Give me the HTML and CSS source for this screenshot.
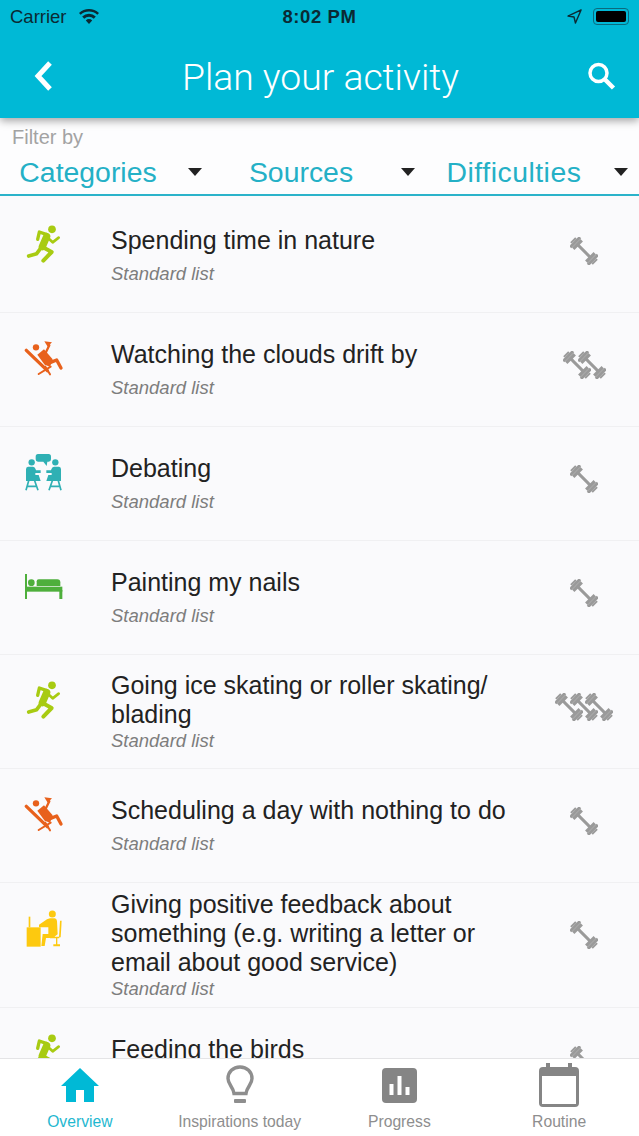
FILE: index.html
```html
<!DOCTYPE html>
<html lang="en">
<head>
  <meta charset="UTF-8" />
  <title>Plan your activity</title>
  <link rel="stylesheet" href="styles.css">
</head>
<body>
  <svg class="defs" width="0" height="0">
    <symbol id="runner" viewBox="72 42 132 132">
      <g fill="none" stroke="#a8cb12" stroke-linecap="round" stroke-linejoin="round">
        <path d="M141 74 118 66 113 88" stroke-width="10"/>
        <path d="M144 84 158 97 176 83" stroke-width="8"/>
        <path d="M140 80 127 110" stroke-width="22"/>
        <path d="M129 112 155 126 130 152" stroke-width="12"/>
        <path d="M124 112 110 131 86 138" stroke-width="11"/>
      </g>
      <circle cx="156" cy="58" r="11.500" fill="#a8cb12"/>
    </symbol>
    <symbol id="chair" viewBox="72 384 132 132">
      <g fill="none" stroke="#e8611c" stroke-linecap="round" stroke-linejoin="round">
        <path d="M79 421 142 482" stroke-width="10"/>
        <path d="M116 492 152 470M136 470 150 493" stroke-width="6"/>
        <path d="M137 428 148 406" stroke-width="7"/>
        <path d="M150 458 170 450 183 474" stroke-width="10"/>
      </g>
      <path d="M112 434 132 418 158 448 150 470 134 464z" fill="#e8611c"/>
      <circle cx="108" cy="412" r="9.500" fill="#e8611c"/>
      <path d="M133 394 156 397 143 410z" fill="#e8611c"/>
    </symbol>
    <symbol id="talk" viewBox="72 726 132 132">
      <path d="M114 732h32q7 0 7 8v8q0 7-7 7h-4l-2 13-10-13h-16q-7 0-7-7v-8q0-8 7-8z" fill="#2fb0b4"/>
      <g id="talker">
        <circle cx="95" cy="757" r="9.500" fill="#2fb0b4"/>
        <path d="M84 770h15q6 0 8 8l1 3h14v8h-16v6h10l6 18H78v-35q0-8 6-8z" fill="#2fb0b4"/>
        <path d="M86 812 78 841M104 812 114 841M82 829h28" fill="none" stroke="#2fb0b4" stroke-width="5"/>
      </g>
      <use href="#talker" transform="matrix(-1 0 0 1 261 0)"/>
    </symbol>
    <symbol id="bed" viewBox="72 138 132 132">
      <g fill="#4eaf3c">
        <rect x="75" y="162" width="6" height="75"/>
        <rect x="81" y="200" width="106" height="15"/>
        <rect x="178" y="210" width="9" height="27"/>
        <circle cx="94" cy="188" r="10"/>
        <path d="M116 178h56q9 0 9 9v11h-71v-14q0-6 6-6z"/>
      </g>
    </symbol>
    <symbol id="desk" viewBox="72 54 132 132">
      <g fill="#fdc90f">
        <rect x="86" y="80" width="5" height="32"/>
        <rect x="80" y="112" width="42" height="58"/>
        <circle cx="157" cy="72" r="10.500"/>
        <path d="M150 85h14q6 0 7 8l2 40-10 7h-18v-28h-28v-8l24-16z"/>
        <path d="M150 132h14v12h-26l-4 24h-10l4-36z"/>
        <path d="M180 92h5l-3 50h-5z"/>
        <path d="M150 140h28v5h-6v18h8v6h-20v-6h8v-18h-18z"/>
      </g>
    </symbol>
    <symbol id="weight" viewBox="0 0 28 28">
      <g transform="rotate(45 14 14)" fill="#9a9a9a">
        <rect x="4" y="12.500" width="20" height="3"/>
        <rect x="-2" y="10.500" width="2" height="7"/>
        <rect x="0" y="7" width="3" height="14"/>
        <rect x="3" y="8" width="3.500" height="12"/>
        <rect x="21.500" y="8" width="3.500" height="12"/>
        <rect x="25" y="7" width="3" height="14"/>
        <rect x="28" y="10.500" width="2" height="7"/>
      </g>
    </symbol>
  </svg>

  <div class="app">
    <header class="topbar">
      <div class="status">
        <div class="status-left">
          <span>Carrier</span>
          <svg class="wifi" viewBox="0 0 20 15"><path d="M10 15 6.800 11.400a4.600 4.600 0 0 1 6.400 0zM5.200 9.700 3.200 7.500a10 10 0 0 1 13.600 0l-2 2.200a7 7 0 0 0-9.600 0zM1.700 5.800 0 4a14.600 14.600 0 0 1 20 0l-1.700 1.800a12 12 0 0 0-16.600 0z" fill="#0b2a33"/></svg>
        </div>
        <div class="status-time">8:02 PM</div>
        <div class="status-right">
          <svg class="locate" viewBox="0 0 16 16"><path d="M15 1 1 7.500l6.500 1L9 15z" fill="none" stroke="#0b2a33" stroke-width="1.500" stroke-linejoin="round"/></svg>
          <div class="battery"><div class="battery-fill"></div></div>
        </div>
      </div>
      <nav class="nav">
        <svg class="back" viewBox="0 0 20 32"><path d="M16 3 4 16l12 13" fill="none" stroke="#fff" stroke-width="5"/></svg>
        <h1>Plan your activity</h1>
        <svg class="search" viewBox="0 0 28 28"><circle cx="11" cy="11" r="8.500" fill="none" stroke="#fff" stroke-width="3.500"/><path d="m17 17 9 9" stroke="#fff" stroke-width="4.500"/></svg>
      </nav>
    </header>

    <section class="filters">
      <div class="filter-label">Filter by</div>
      <div class="pickers">
        <div class="picker"><span>Categories</span><i class="caret"></i></div>
        <div class="picker"><span>Sources</span><i class="caret"></i></div>
        <div class="picker picker-wide"><span>Difficulties</span><i class="caret"></i></div>
      </div>
    </section>

    <main class="list">
      <div class="row">
        <svg class="cat"><use href="#runner"/></svg>
        <div class="info"><div class="name">Spending time in nature</div><div class="source">Standard list</div></div>
        <div class="level"><svg><use href="#weight"/></svg></div>
      </div>
      <div class="row">
        <svg class="cat"><use href="#chair"/></svg>
        <div class="info"><div class="name">Watching the clouds drift by</div><div class="source">Standard list</div></div>
        <div class="level"><svg><use href="#weight"/></svg><svg><use href="#weight"/></svg></div>
      </div>
      <div class="row">
        <svg class="cat"><use href="#talk"/></svg>
        <div class="info"><div class="name">Debating</div><div class="source">Standard list</div></div>
        <div class="level"><svg><use href="#weight"/></svg></div>
      </div>
      <div class="row">
        <svg class="cat"><use href="#bed"/></svg>
        <div class="info"><div class="name">Painting my nails</div><div class="source">Standard list</div></div>
        <div class="level"><svg><use href="#weight"/></svg></div>
      </div>
      <div class="row">
        <svg class="cat"><use href="#runner"/></svg>
        <div class="info"><div class="name">Going ice skating or roller skating/<wbr>blading</div><div class="source">Standard list</div></div>
        <div class="level"><svg><use href="#weight"/></svg><svg><use href="#weight"/></svg><svg><use href="#weight"/></svg></div>
      </div>
      <div class="row">
        <svg class="cat"><use href="#chair"/></svg>
        <div class="info"><div class="name">Scheduling a day with nothing to do</div><div class="source">Standard list</div></div>
        <div class="level"><svg><use href="#weight"/></svg></div>
      </div>
      <div class="row">
        <svg class="cat"><use href="#desk"/></svg>
        <div class="info"><div class="name">Giving positive feedback about something (e.g. writing a letter or email about good service)</div><div class="source">Standard list</div></div>
        <div class="level"><svg><use href="#weight"/></svg></div>
      </div>
      <div class="row">
        <svg class="cat"><use href="#runner"/></svg>
        <div class="info"><div class="name">Feeding the birds</div><div class="source">Standard list</div></div>
        <div class="level"><svg><use href="#weight"/></svg></div>
      </div>
    </main>

    <footer class="tabs">
      <div class="tab active">
        <div class="tab-icon"><svg width="40" height="35" viewBox="0 0 40 35"><path d="M20 0 39 18H34V34H24V22H16V34H6V18H1z" fill="#00b9d6"/></svg></div>
        <span>Overview</span>
      </div>
      <div class="tab">
        <div class="tab-icon"><svg width="28" height="40" viewBox="0 0 28 40"><path d="M14 2C7 2 2 7 2 13.500c0 6 5 8 6 15h12c1-7 6-9 6-15C26 7 21 2 14 2z" fill="none" stroke="#8e8e8e" stroke-width="3.400"/><rect x="8" y="34" width="12" height="4" rx="1" fill="#8e8e8e"/></svg></div>
        <span>Inspirations today</span>
      </div>
      <div class="tab">
        <div class="tab-icon"><svg width="35" height="35" viewBox="0 0 35 35"><rect width="35" height="35" rx="4" fill="#858585"/><path d="M7.500 16h4v11h-4zM15.500 8h4v19h-4zM23.500 19h4v8h-4z" fill="#fff"/></svg></div>
        <span>Progress</span>
      </div>
      <div class="tab">
        <div class="tab-icon"><svg width="40" height="44" viewBox="0 0 40 44"><path d="M7 0h4v4h18V0h4v4h3q4 0 4 4v32q0 4-4 4H4q-4 0-4-4V8q0-4 4-4h3zM3 13v28h34V13z" fill="#858585"/></svg></div>
        <span>Routine</span>
      </div>
    </footer>
  </div>
</body>
</html>
```

FILE: styles.css
```css
html, body {
  margin: 0;
  padding: 0;
}
body {
  font-family: 'Liberation Sans', Arial, sans-serif;
  color: #222;
  background: #fff;
}
.defs {
  display: block;
  height: 0;
}
.app {
  width: 639px;
  height: 1136px;
  display: flex;
  flex-direction: column;
  overflow: hidden;
  background: #fafafc;
}

/* top bar */
.topbar {
  height: 118px;
  flex: none;
  background: #00b9d6;
  box-shadow: 0 3px 8px rgba(0,0,0,0.35);
  position: relative;
  z-index: 2;
}
.status {
  height: 33px;
  display: grid;
  grid-template-columns: 1fr auto 1fr;
  align-items: center;
  padding: 0 10px;
  font-size: 18.5px;
  color: #0b2a33;
}
.status-left {
  display: flex;
  align-items: center;
  gap: 12px;
}
.wifi {
  width: 20px;
  height: 15px;
}
.status-time {
  font-size: 18.5px;
  font-weight: bold;
  letter-spacing: 0.6px;
}
.status-right {
  display: flex;
  justify-content: flex-end;
  align-items: center;
  gap: 11px;
}
.locate {
  width: 15px;
  height: 15px;
}
.battery {
  width: 36px;
  height: 17px;
  box-sizing: border-box;
  border: 1px solid #0b6a7d;
  border-radius: 4px;
  padding: 2px;
}
.battery-fill {
  height: 100%;
  background: #000;
  border-radius: 2px;
}
.nav {
  height: 85px;
  display: flex;
  align-items: center;
  justify-content: space-between;
  padding: 0 23px 0 34px;
}
.nav h1 {
  margin: 2px 0 0;
  font-family: Roboto, sans-serif;
  font-weight: 300;
  font-size: 37.3px;
  color: #fff;
}
.back {
  width: 20px;
  height: 32px;
}
.search {
  width: 29px;
  height: 28px;
}

/* filters */
.filters {
  flex: none;
  height: 78px;
  box-sizing: border-box;
  background: #fdfdfe;
  border-bottom: 2px solid #2bb3ca;
  padding-top: 7px;
}
.filter-label {
  padding-left: 12px;
  font-size: 20px;
  line-height: 24px;
  color: #a3a3a3;
}
.pickers {
  display: grid;
  grid-template-columns: repeat(3, 213px);
  margin-top: 6px;
}
.picker {
  display: flex;
  align-items: center;
  padding-right: 11px;
}
.picker span {
  flex: 1;
  padding-right: 12px;
  text-align: center;
  font-size: 28.4px;
  line-height: 34px;
  color: #24b0c6;
}
.picker-wide span {
  letter-spacing: 0.5px;
}
.caret {
  width: 0;
  height: 0;
  border-left: 7px solid transparent;
  border-right: 7px solid transparent;
  border-top: 8px solid #222;
}

/* activity list */
.list {
  flex: 1;
  min-height: 0;
  overflow: hidden;
  padding-top: 3px;
}
.row {
  display: flex;
  align-items: flex-start;
  box-sizing: border-box;
  min-height: 114px;
  padding: 7px 0 6px;
  border-bottom: 1px solid #f0f0f2;
}
.cat {
  flex: none;
  width: 44px;
  height: 44px;
  margin: 18px 0 0 24px;
}
.info {
  flex: 1;
  min-width: 0;
  align-self: center;
  margin-left: 43px;
}
.name {
  min-height: 36px;
  font-size: 25px;
  line-height: 29px;
  color: #222;
}
.source {
  font-size: 18.5px;
  line-height: 24px;
  font-style: italic;
  color: #7d7d7d;
}
.level {
  flex: none;
  width: 110px;
  margin-top: 31px;
  display: flex;
  justify-content: center;
}
.level svg {
  width: 28px;
  height: 28px;
  overflow: visible;
}
.level svg + svg {
  margin-left: -13px;
}

/* bottom tabs */
.tabs {
  flex: none;
  height: 78px;
  box-sizing: border-box;
  display: grid;
  grid-template-columns: repeat(4, 1fr);
  background: #fff;
  border-top: 1px solid #e4e4e6;
  padding-top: 4px;
  position: relative;
}
.tab {
  display: flex;
  flex-direction: column;
  align-items: center;
  font-size: 15.7px;
  line-height: 20px;
  color: #8e8e8e;
}
.tab-icon {
  height: 44px;
  margin-bottom: 5px;
  display: flex;
  align-items: center;
}
.tab.active {
  color: #1fb8d0;
}
```
